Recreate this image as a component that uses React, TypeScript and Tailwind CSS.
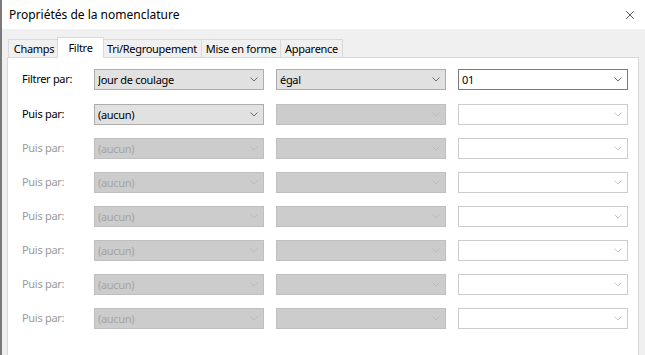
import { X } from "lucide-react";

type Kind = "enabled" | "focused" | "disabled" | "empty";

const comboStyles: Record<Kind, string> = {
  enabled: "bg-[#e1e1e1] border-[#adadad] text-black",
  focused: "bg-white border-[#7a7a7a] text-[#000010]",
  disabled: "bg-[#cccccc] border-[#bfbfbf] text-[#a3a3a3]",
  empty: "bg-white border-[#cccccc] text-black",
};

const chevronColor: Record<Kind, string> = {
  enabled: "#606060",
  focused: "#606060",
  disabled: "#b8b8b8",
  empty: "#c2c2c2",
};

function Combo({ kind, value = "" }: { kind: Kind; value?: string }) {
  return (
    <div
      className={`flex items-center h-[21px] w-[170px] border pl-[3px] pr-[5px] ${comboStyles[kind]}`}
    >
      <span className="flex-1 whitespace-nowrap overflow-hidden leading-[19px]">{value}</span>
      <svg width="8" height="5" viewBox="0 0 8 5" className="shrink-0">
        <path d="M0.5 0.5 L4 4 L7.5 0.5" fill="none" stroke={chevronColor[kind]} strokeWidth="0.9" />
      </svg>
    </div>
  );
}

type Row = { label: string; active: boolean; cols: [Kind, Kind, Kind]; values: [string, string, string] };

const rows: Row[] = [
  { label: "Filtrer par:", active: true, cols: ["enabled", "enabled", "focused"], values: ["Jour de coulage", "égal", "01"] },
  { label: "Puis par:", active: true, cols: ["enabled", "disabled", "empty"], values: ["(aucun)", "", ""] },
  ...Array.from({ length: 6 }, (): Row => ({
    label: "Puis par:",
    active: false,
    cols: ["disabled", "disabled", "empty"],
    values: ["(aucun)", "", ""],
  })),
];

const tabs = [
  { name: "Champs", w: "w-[51px]" },
  { name: "Filtre", w: "w-[41px]", selected: true },
  { name: "Tri/Regroupement", w: "w-[99px]" },
  { name: "Mise en forme", w: "w-[79px]" },
  { name: "Apparence", w: "w-[63px]" },
];

export default function App() {
  return (
    <div
      className="w-[645px] h-[355px] flex flex-col bg-[#f0f0f0] border-l-2 border-[#7a7a7a] overflow-hidden text-[11px] tracking-[-0.3px] text-black"
      style={{ fontFamily: '"Noto Sans", "Open Sans", sans-serif' }}
    >
      <div className="h-[29px] shrink-0 bg-white flex items-center justify-between pl-[7px] pr-[8px]">
        <span className="text-[12px] tracking-normal">Propriétés de la nomenclature</span>
        <X size={14} strokeWidth={1.1} className="text-black" />
      </div>

      <div className="h-[28px] shrink-0 flex items-end pl-[6px]">
        {tabs.map((t, i) =>
          t.selected ? (
            <div
              key={t.name}
              className={`${t.w} relative z-10 -mx-[2px] box-content px-[2px] h-[20px] -mb-px bg-white border border-b-0 border-[#d9d9d9] flex items-center justify-center whitespace-nowrap`}
            >
              {t.name}
            </div>
          ) : (
            <div
              key={t.name}
              className={`${t.w} h-[18px] bg-[#f0f0f0] border-t border-l border-[#d9d9d9] flex items-center justify-center pt-[1px] whitespace-nowrap ${i === tabs.length - 1 ? "border-r" : ""}`}
            >
              {t.name}
            </div>
          )
        )}
      </div>

      <div className="flex-1 ml-[5px] mr-[6px] bg-white border-t border-l border-r border-[#d9d9d9] pt-[11px] flex flex-col">
        {rows.map((r, i) => (
          <div key={i} className={`flex items-center ${i === 0 ? "" : i === 1 ? "mt-[14px]" : "mt-[13px]"}`}>
            <span className={`w-[86px] pl-[14px] shrink-0 whitespace-nowrap ${r.active ? "text-black" : "text-[#9a9a9a]"}`}>{r.label}</span>
            <div className="flex gap-[12px]">
              {r.cols.map((k, j) => (
                <Combo key={j} kind={k} value={r.values[j]} />
              ))}
            </div>
          </div>
        ))}
      </div>
    </div>
  );
}
